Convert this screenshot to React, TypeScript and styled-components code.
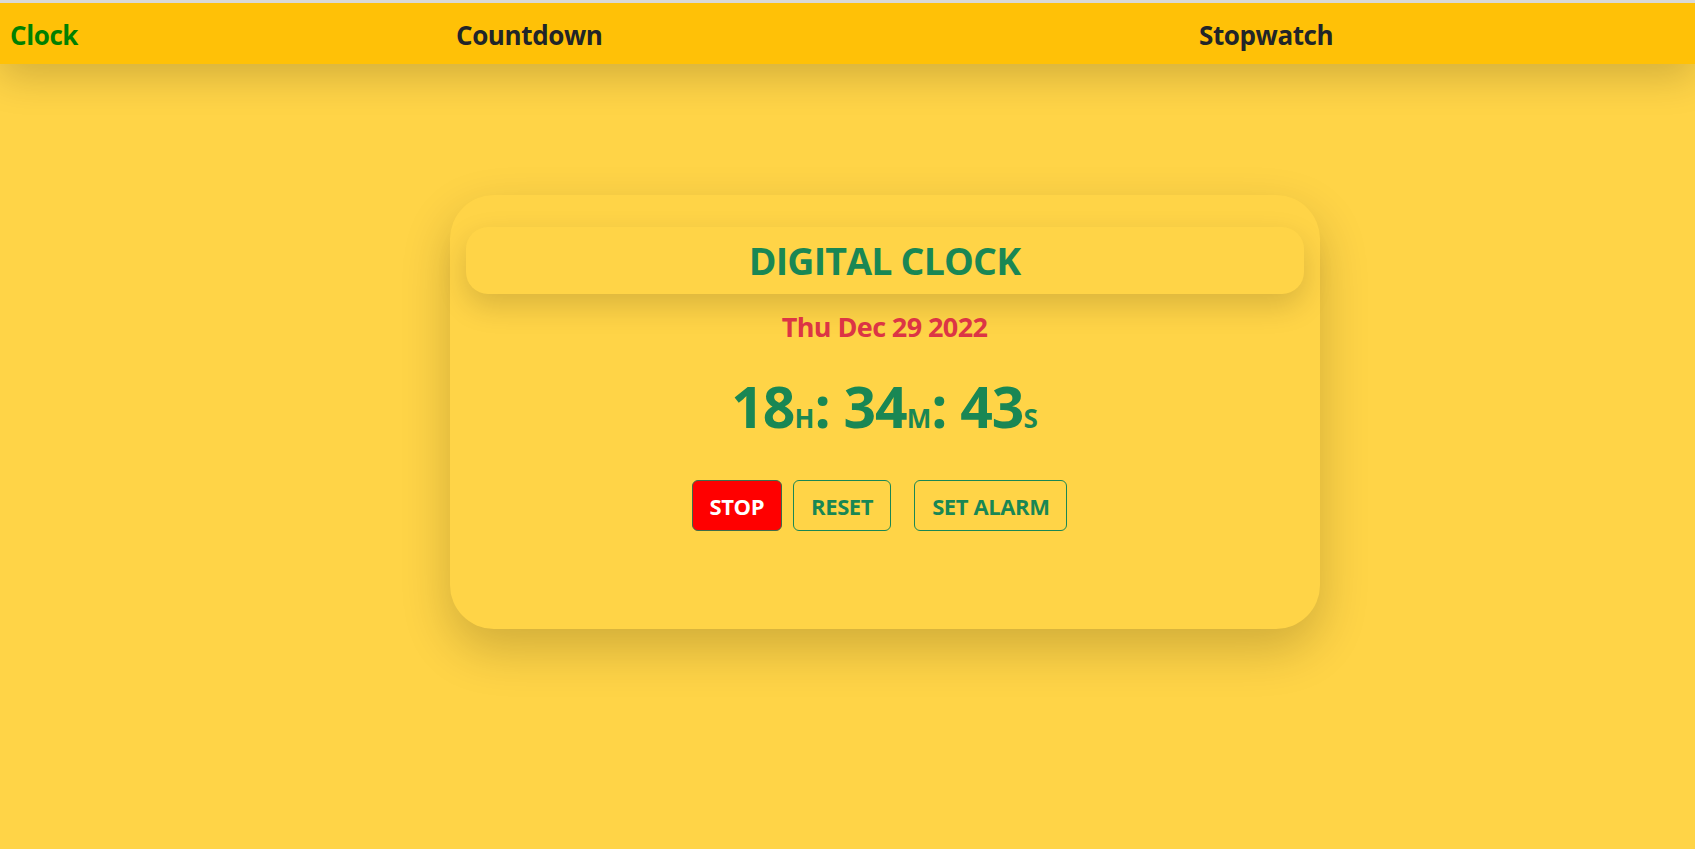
import React from "react";
import styled, { createGlobalStyle } from "styled-components";

const Global = createGlobalStyle`
  html, body { margin: 0; padding: 0; }
  body {
    background: #ffd447;
    font-family: "Open Sans", "Noto Sans", sans-serif;
    min-height: 849px;
    border-top: 3px solid #d9d9d9;
    box-sizing: border-box;
  }
`;

const Nav = styled.nav`
  height: 61px;
  box-sizing: border-box;
  padding-top: 2px;
  background: #ffc107;
  box-shadow: 0 12px 40px rgba(0, 0, 0, 0.18);
  display: grid;
  grid-template-columns: 446px 743px 1fr;
  align-items: center;
  padding-left: 10px;
  position: relative;
  z-index: 1;
`;

const NavLink = styled.a<{ $active?: boolean }>`
  font-size: 26px;
  font-weight: 700;
  letter-spacing: -0.4px;
  color: ${(p) => (p.$active ? "#008000" : "#212529")};
  text-decoration: none;
  cursor: pointer;
`;

const Main = styled.main`
  display: flex;
  justify-content: center;
  padding-top: 131px;
  padding-left: 74px;
`;

const Card = styled.section`
  width: 870px;
  height: 434px;
  box-sizing: border-box;
  background: #ffd447;
  border-radius: 44px;
  box-shadow: 0 20px 50px rgba(0, 0, 0, 0.19);
  padding: 32px 16px 0;
  display: flex;
  flex-direction: column;
  align-items: center;
`;

const Header = styled.header`
  align-self: stretch;
  height: 67px;
  border-radius: 22px;
  background: #ffd447;
  box-shadow: 0 12px 30px rgba(0, 0, 0, 0.15);
  display: flex;
  align-items: center;
  justify-content: center;
`;

const Title = styled.h1`
  margin: 0;
  font-size: 37.5px;
  font-weight: 700;
  letter-spacing: -0.8px;
  color: #198754;
`;

const DateText = styled.div`
  margin-top: 14px;
  font-size: 27px;
  font-weight: 700;
  letter-spacing: -0.6px;
  color: #dc3545;
`;

const Time = styled.div`
  margin-top: 27px;
  font-size: 57px;
  font-weight: 700;
  letter-spacing: -1px;
  color: #198754;
  line-height: 1.2;
`;

const Unit = styled.span`
  font-size: 26px;
  letter-spacing: 0;
`;

const Buttons = styled.div`
  margin-top: 40px;
  margin-right: 10px;
  display: flex;
  align-items: center;
`;

const Btn = styled.button<{ $danger?: boolean; $gap?: number }>`
  height: 51px;
  padding: 0 17px;
  margin-left: ${(p) => p.$gap ?? 0}px;
  font-family: "Open Sans", "Noto Sans", sans-serif;
  font-size: 22px;
  font-weight: 700;
  letter-spacing: -0.4px;
  border-radius: 6px;
  cursor: pointer;
  border: 1px solid ${(p) => (p.$danger ? "#3f6b4a" : "#198754")};
  background: ${(p) => (p.$danger ? "#ff0000" : "transparent")};
  color: ${(p) => (p.$danger ? "#ffffff" : "#198754")};
`;

export default function App() {
  return (
    <>
      <Global />
      <Nav>
        <NavLink $active>Clock</NavLink>
        <NavLink>Countdown</NavLink>
        <NavLink>Stopwatch</NavLink>
      </Nav>
      <Main>
        <Card>
          <Header>
            <Title>DIGITAL CLOCK</Title>
          </Header>
          <DateText>Thu Dec 29 2022</DateText>
          <Time>
            18<Unit>H</Unit>: 34<Unit>M</Unit>: 43<Unit>S</Unit>
          </Time>
          <Buttons>
            <Btn $danger>STOP</Btn>
            <Btn $gap={11}>RESET</Btn>
            <Btn $gap={23}>SET ALARM</Btn>
          </Buttons>
        </Card>
      </Main>
    </>
  );
}
